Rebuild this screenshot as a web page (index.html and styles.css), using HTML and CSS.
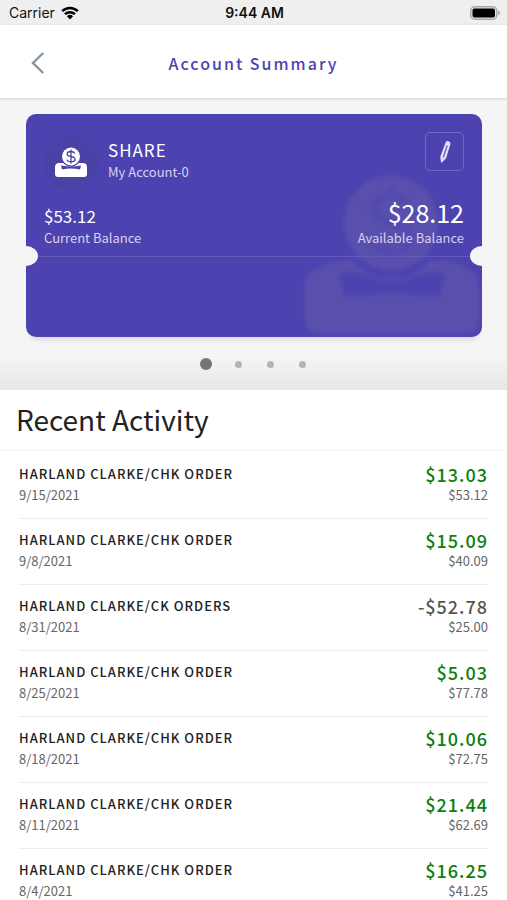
FILE: index.html
```html
<!DOCTYPE html>
<html lang="en">
<head>
<meta charset="utf-8">
<meta name="viewport" content="width=device-width, initial-scale=1">
<title>Account Summary</title>
<link rel="stylesheet" href="styles.css">
</head>
<body>
<div class="app">
  <div class="status">
    <div class="carrier">
      <span>Carrier</span>
      <svg class="wifi" viewBox="0 0 18 14" aria-hidden="true">
        <path d="M1.2 5.2a11.2 11.2 0 0 1 15.6 0M4 8.2a7.2 7.2 0 0 1 10 0" fill="none" stroke="#000" stroke-width="2.5"/>
        <path d="M9 13.4 5.9 10.3a4.5 4.5 0 0 1 6.2 0z"/>
      </svg>
    </div>
    <time class="clock">9:44 AM</time>
    <svg class="battery" viewBox="0 0 30 14" aria-hidden="true">
      <rect x=".75" y=".75" width="26" height="12.5" rx="4" fill="#e4e4e4" stroke="#a9a9a9" stroke-width="1.5"/>
      <rect x="2.5" y="2.5" width="22.5" height="9" rx="2" fill="#000"/>
      <path d="M28 4.800q2 .6 2 2.200t-2 2.200z" fill="#a9a9a9"/>
    </svg>
  </div>

  <header class="header">
    <button class="back" type="button" aria-label="Back">
      <svg viewBox="0 0 14 24" aria-hidden="true"><path d="M12.2 2 2 12l10.2 10" fill="none" stroke="#8794a1" stroke-width="2.4"/></svg>
    </button>
    <h1 class="title">Account Summary</h1>
  </header>

  <section class="carousel" aria-label="Accounts">
    <article class="card">
      <svg class="watermark" viewBox="0 0 176 158" aria-hidden="true">
        <path d="M14 92Q34 82 50 86q8 9 24 16h27q17-7 24-16 22-4 37 6 13 5 13 18v34q0 13-13 13H14q-13 0-13-13v-34q0-13 13-18z"/>
        <path class="watermark-cut" d="M35 99l6-4q10 2 20 4 27 12 54 0 10-2 20-4l6 4-5 23q-48-8-96 0z"/>
        <circle cx="87" cy="47" r="47"/>
        <path class="watermark-sign" d="M104 29q-5-9-17-9-17 0-17 13 0 10 17 14 18 4 18 15 0 13-18 13-14 0-19-9M87 11v9M87 75v9"/>
      </svg>
      <span class="notch notch-left"></span>
      <span class="notch notch-right"></span>
      <div class="card-main">
        <div class="card-top">
          <span class="badge">
            <svg viewBox="0 0 34 32" aria-hidden="true">
              <path d="M4.500 16h25q3.500.5 3.500 4v7q0 3-3 3H4q-3 0-3-3v-7q0-3.500 3.500-4z" fill="#fff"/>
              <path d="M7 18.500q10 2 20 0l-1 4q-9-1.800-18 0z" fill="#4a42a5"/>
              <circle cx="17" cy="9.800" r="10" fill="#4a42a5"/>
              <circle cx="17" cy="9.500" r="9" fill="#fff"/>
              <path d="M20.800 6.500Q19.500 4.500 17 4.500q-3.800 0-3.800 2.500 0 2 3.800 2.500 4 .5 4 2.800 0 2.600-4 2.600-3 0-4.100-2.200M17 2.500v14" fill="none" stroke="#4a42a5" stroke-width="1.300"/>
            </svg>
          </span>
          <div class="account">
            <h2 class="account-type">SHARE</h2>
            <p class="account-name">My Account-0</p>
          </div>
          <button class="edit" type="button" aria-label="Edit account">
            <svg viewBox="0 0 14 24" aria-hidden="true">
              <path d="M7.600 2.500q.9-2 3.200-1.300 2.300.8 1.600 3L8 18.500 3.200 23l-1-6z" fill="#e2e0f6"/>
              <path d="M9.200 5.500 5.300 17.500" stroke="#6e65c0" stroke-width="1.400"/>
            </svg>
          </button>
        </div>
        <dl class="balances">
          <div class="balance">
            <dd class="current">$53.12</dd>
            <dt>Current Balance</dt>
          </div>
          <div class="balance balance-right">
            <dd class="available">$28.12</dd>
            <dt>Available Balance</dt>
          </div>
        </dl>
      </div>
    </article>
    <div class="dots">
      <button class="dot dot-active" type="button" aria-label="Account 1"></button>
      <button class="dot" type="button" aria-label="Account 2"></button>
      <button class="dot" type="button" aria-label="Account 3"></button>
      <button class="dot" type="button" aria-label="Account 4"></button>
    </div>
  </section>

  <h2 class="section-title">Recent Activity</h2>
  <ul class="activity">
    <li class="row"><div><p class="payee">HARLAND CLARKE/CHK ORDER</p><p class="sub">9/15/2021</p></div><div class="figures"><p class="amount">$13.03</p><p class="sub">$53.12</p></div></li>
    <li class="row"><div><p class="payee">HARLAND CLARKE/CHK ORDER</p><p class="sub">9/8/2021</p></div><div class="figures"><p class="amount">$15.09</p><p class="sub">$40.09</p></div></li>
    <li class="row"><div><p class="payee">HARLAND CLARKE/CK ORDERS</p><p class="sub">8/31/2021</p></div><div class="figures"><p class="amount debit">-$52.78</p><p class="sub">$25.00</p></div></li>
    <li class="row"><div><p class="payee">HARLAND CLARKE/CHK ORDER</p><p class="sub">8/25/2021</p></div><div class="figures"><p class="amount">$5.03</p><p class="sub">$77.78</p></div></li>
    <li class="row"><div><p class="payee">HARLAND CLARKE/CHK ORDER</p><p class="sub">8/18/2021</p></div><div class="figures"><p class="amount">$10.06</p><p class="sub">$72.75</p></div></li>
    <li class="row"><div><p class="payee">HARLAND CLARKE/CHK ORDER</p><p class="sub">8/11/2021</p></div><div class="figures"><p class="amount">$21.44</p><p class="sub">$62.69</p></div></li>
    <li class="row"><div><p class="payee">HARLAND CLARKE/CHK ORDER</p><p class="sub">8/4/2021</p></div><div class="figures"><p class="amount">$16.25</p><p class="sub">$41.25</p></div></li>
  </ul>
</div>
</body>
</html>
```
FILE: styles.css
```css
* {
  box-sizing: border-box;
}

body,
h1,
h2,
p,
ul,
dl,
dd {
  margin: 0;
  padding: 0;
}

body {
  background: #fff;
  color: #222;
  font-family: "Noto Sans CJK SC", "Noto Sans", sans-serif;
}

button {
  border: 0;
  padding: 0;
  background: none;
}

svg {
  display: block;
}

.app {
  display: flex;
  flex-direction: column;
  height: 100vh;
}

.status {
  display: grid;
  grid-template-columns: 1fr auto 1fr;
  align-items: center;
  flex: none;
  padding: 4px 7px 3px 9px;
  background: #efefef;
  color: #111;
  font: 14px/18px Inter, "Liberation Sans", sans-serif;
}

.carrier {
  display: flex;
  align-items: center;
  gap: 6px;
}

.wifi {
  width: 18px;
  height: 14px;
}

.clock {
  font-weight: 600;
}

.battery {
  width: 30px;
  height: 14px;
  justify-self: end;
}

.header {
  position: relative;
  z-index: 1;
  display: grid;
  grid-template-columns: 60px 1fr 60px;
  align-items: center;
  flex: none;
  padding: 26px 0 23px;
  background: #fff;
  box-shadow: 0 1px 3px rgba(0, 0, 0, 0.15);
}

.back {
  padding-left: 31px;
}

.back svg {
  width: 14px;
  height: 24px;
}

.title {
  color: #4d43b0;
  font-size: 16px;
  font-weight: 500;
  line-height: 24px;
  letter-spacing: 2px;
  text-align: center;
}

.carousel {
  flex: none;
  padding: 16px 25px 19px 26px;
  background: linear-gradient(#f5f5f5 88%, #e7e7e7);
}

.card {
  position: relative;
  margin-bottom: 20px;
  padding-bottom: 80px;
  overflow: hidden;
  border-radius: 10px;
  background: #4d43b0;
  box-shadow: 0 7px 5px -4px rgba(0, 0, 0, 0.1);
  color: #fff;
}

.watermark {
  position: absolute;
  right: 2px;
  bottom: 3px;
  width: 176px;
  height: 158px;
  fill: #5950ad;
  filter: blur(2px);
}

.watermark .watermark-cut {
  fill: #4d43b0;
}

.watermark .watermark-sign {
  fill: none;
  stroke: #534aae;
  stroke-width: 8px;
}

.notch {
  position: absolute;
  top: 132px;
  width: 24px;
  height: 20px;
  border-radius: 50%;
  background: #f5f5f5;
}

.notch-left {
  left: -12px;
}

.notch-right {
  right: -12px;
}

.card-main {
  position: relative;
  margin: 0 12px;
  padding: 18px 6px 8px;
  border-bottom: 1px solid #6259b8;
}

.card-top {
  display: flex;
  align-items: flex-start;
}

.badge {
  display: grid;
  place-items: center;
  width: 54px;
  height: 54px;
  border-radius: 50%;
  background: #4a42a5;
  margin-top: 4px;
}

.badge svg {
  width: 34px;
  height: 32px;
}

.account {
  flex: 1;
  margin-left: 10px;
  padding-top: 6px;
}

.account-type {
  font-size: 17px;
  font-weight: 400;
  line-height: 24px;
  letter-spacing: 1px;
}

.account-name,
.balance dt {
  color: #d5d2ee;
  font-size: 13px;
  line-height: 20px;
}

.edit {
  display: grid;
  place-items: center;
  width: 39px;
  height: 39px;
  border: 1px solid #7269c1;
  border-radius: 5px;
}

.edit svg {
  width: 14px;
  height: 24px;
}

.balances {
  display: flex;
  align-items: flex-end;
  justify-content: space-between;
  margin-top: 6px;
}

.balance {
  display: flex;
  flex-direction: column;
}

.balance-right {
  text-align: right;
}

.current {
  font-size: 17px;
  line-height: 24px;
}

.available {
  font-size: 25px;
  line-height: 32px;
}

.dots {
  display: flex;
  justify-content: center;
}

.dot {
  display: grid;
  place-items: center;
  width: 32px;
  height: 14px;
}

.dot::before {
  content: "";
  width: 7px;
  height: 7px;
  border-radius: 50%;
  background: #b5b5b5;
}

.dot-active::before {
  width: 12px;
  height: 12px;
  background: #757575;
}

.section-title {
  flex: none;
  padding: 9px 16px 11px;
  border-bottom: 1px solid #f2f2f2;
  font-size: 28px;
  font-weight: 400;
  line-height: 40px;
}

.activity {
  flex: 1;
  min-height: 0;
  padding: 2px 19px 0;
  overflow-y: auto;
  scrollbar-width: none;
  list-style: none;
}

.row {
  display: flex;
  align-items: flex-start;
  justify-content: space-between;
  padding: 10px 0 13px;
  border-bottom: 1px solid #ededed;
}

.payee,
.amount {
  font-weight: 500;
  line-height: 22px;
  letter-spacing: 1px;
}

.payee {
  font-size: 13px;
}

.sub {
  color: #666;
  font-size: 13px;
  line-height: 20px;
}

.figures {
  text-align: right;
}

.amount {
  color: #0b800f;
  font-size: 18px;
}

.debit {
  color: #555;
}
```
